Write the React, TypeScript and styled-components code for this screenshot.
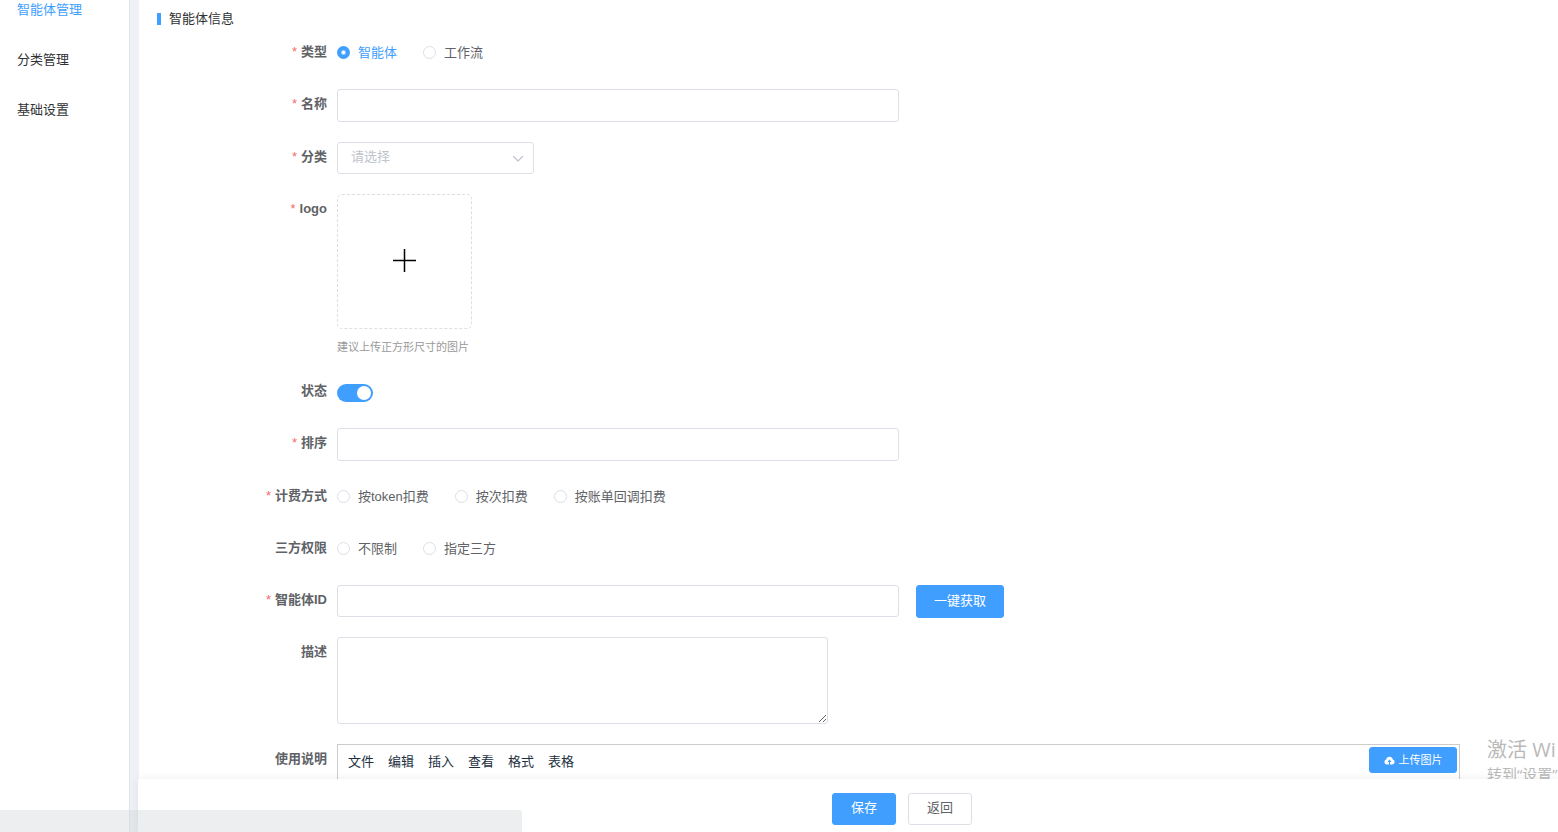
import React from "react";
import styled, { createGlobalStyle, css } from "styled-components";

const blue = "#409eff";
const line = "#dcdfe6";
const ink = "#606266";

const GlobalStyle = createGlobalStyle`
  *, *::before, *::after { box-sizing: border-box; }
  body {
    margin: 0;
    background: #eef2f6;
    color: ${ink};
    font: 13px/20px "Liberation Sans", "Noto Sans CJK SC", sans-serif;
  }
  button, input, select, textarea { font: inherit; color: inherit; margin: 0; }
`;

const Page = styled.div`
  position: relative;
  display: flex;
  gap: 9px;
  height: 100vh;
  overflow: hidden;
`;

const Sidebar = styled.nav`
  flex: none;
  display: flex;
  flex-direction: column;
  gap: 30px;
  width: 130px;
  padding-left: 17px;
  border-right: 1px solid #e2e4e6;
  background: #fff;
`;

const NavLink = styled.a<{ $active?: boolean }>`
  color: ${(p) => (p.$active ? blue : "#303133")};
  text-decoration: none;
`;

const Main = styled.main`
  flex: 1;
  min-width: 0;
  padding: 9px 98px 0 18px;
  background: #fff;
  overflow: hidden;
`;

const Title = styled.h1`
  display: flex;
  align-items: center;
  gap: 8px;
  margin: 0 0 8px;
  color: #303133;
  font-size: 13px;
  font-weight: 400;

  &::before {
    content: "";
    width: 4px;
    height: 12px;
    background: ${blue};
  }
`;

const Form = styled.form`
  display: flex;
  flex-direction: column;
  gap: 20px;
`;

const Row = styled.div`
  display: flex;
  align-items: flex-start;
  min-height: 32px;
`;

const labelStyle = css<{ $required?: boolean }>`
  flex: none;
  width: 180px;
  padding-right: 10px;
  text-align: right;
  font-weight: 700;
  line-height: 30px;

  ${(p) =>
    p.$required &&
    css`
      &::before {
        content: "*";
        margin-right: 4px;
        color: #f56c6c;
        font-weight: 400;
      }
    `}
`;

const Label = styled.label`
  ${labelStyle}
`;

const GroupLabel = styled.span`
  ${labelStyle}
`;

const TextInput = styled.input<{ $compact?: boolean }>`
  width: 562px;
  height: ${(p) => (p.$compact ? 32 : 33)}px;
  padding: 0 13px;
  border: 1px solid ${line};
  border-radius: 3px;
  background: #fff;
`;

const TextArea = styled.textarea`
  width: 491px;
  height: 87px;
  padding: 5px 13px;
  border: 1px solid ${line};
  border-radius: 3px;
  background: #fff;
  resize: both;
`;

const SelectWrap = styled.div`
  display: grid;
  align-items: center;
  width: 197px;

  > * { grid-area: 1 / 1; }
  > svg {
    justify-self: end;
    margin-right: 10px;
    pointer-events: none;
  }
`;

const Select = styled.select`
  appearance: none;
  width: 100%;
  height: 32px;
  padding: 0 30px 2px 13px;
  border: 1px solid ${line};
  border-radius: 3px;
  background: #fff;
  color: #c0c4cc;
`;

const RadioGroup = styled.div`
  display: flex;
  gap: 26px;
`;

const RadioLabel = styled.label`
  display: flex;
  align-items: center;
  gap: 8px;
  line-height: 31px;

  &:has(input:checked) { color: ${blue}; }
`;

const RadioInput = styled.input`
  appearance: none;
  width: 13px;
  height: 13px;
  border: 1px solid ${line};
  border-radius: 50%;
  background: #fff;

  &:checked {
    border: 0;
    background: radial-gradient(circle, #fff 1px, ${blue} 3px);
  }
`;

const UploadColumn = styled.div`
  display: flex;
  flex-direction: column;
  gap: 9px;
`;

const UploadBox = styled.button`
  display: grid;
  place-items: center;
  width: 135px;
  height: 135px;
  padding: 0 0 2px;
  border: 1px dashed ${line};
  border-radius: 5px;
  background: #fff;
`;

const Hint = styled.span`
  color: #999;
  font-size: 11px;
  line-height: 18px;
`;

const Switch = styled.input`
  appearance: none;
  width: 36px;
  height: 18px;
  margin-top: 8px;
  border-radius: 9px;
  background: ${line};

  &::before {
    content: "";
    display: block;
    width: 14px;
    height: 14px;
    margin: 2px;
    border-radius: 50%;
    background: #fff;
  }
  &:checked { background: ${blue}; }
  &:checked::before { margin-left: 20px; }
`;

const Button = styled.button<{ $primary?: boolean; $wide?: boolean }>`
  display: flex;
  align-items: center;
  justify-content: center;
  width: ${(p) => (p.$wide ? 88 : 64)}px;
  height: 32px;
  padding: 0 0 2px;
  border: 1px solid ${(p) => (p.$primary ? blue : line)};
  border-radius: 3px;
  background: ${(p) => (p.$primary ? blue : "#fff")};
  color: ${(p) => (p.$primary ? "#fff" : ink)};
`;

const FetchButton = styled(Button)`
  height: 33px;
  margin: 0 0 -1px 17px;
`;

const UploadButton = styled(Button)`
  gap: 4px;
  height: 26px;
  padding: 0;
  font-size: 11px;
`;

const Editor = styled.section`
  flex: 1;
  min-width: 0;
  height: 400px;
  border: 1px solid #ccc;
`;

const EditorBar = styled.div`
  display: flex;
  align-items: flex-start;
  justify-content: space-between;
  padding: 2px 2px 0 10px;
`;

const Menus = styled.div`
  display: flex;
  gap: 14px;
  padding-top: 5px;
`;

const MenuButton = styled.button`
  padding: 0;
  border: 0;
  background: none;
  color: #222f3e;
`;

const Footer = styled.footer`
  position: absolute;
  z-index: 2;
  right: 0;
  bottom: 0;
  left: 138px;
  display: flex;
  justify-content: center;
  gap: 12px;
  height: 53px;
  padding: 14px 0 0 108px;
  background: #fff;
  box-shadow: 0 0 8px rgba(0, 0, 0, 0.08);
`;

const Watermark = styled.aside`
  position: absolute;
  z-index: 1;
  right: 0;
  bottom: 47px;
  width: 71px;
  overflow: hidden;
  color: #b9b9b9;
  font-family: "Open Sans", "Noto Sans CJK SC", sans-serif;
  white-space: nowrap;
`;

const WatermarkTitle = styled.div`
  font-size: 20px;
  line-height: 26px;
`;

const WatermarkText = styled.div`
  font-size: 15px;
  line-height: 22px;
`;

const StatusBar = styled.div`
  position: absolute;
  z-index: 3;
  bottom: 0;
  left: 0;
  width: 522px;
  height: 22px;
  border-radius: 0 3px 0 0;
  background: rgba(210, 212, 216, 0.4);
`;

type RadiosProps = { name: string; label: string; options: string[]; required?: boolean; checked?: number };

function Radios({ name, label, options, required, checked }: RadiosProps) {
  return (
    <Row role="radiogroup" aria-labelledby={`${name}-label`}>
      <GroupLabel id={`${name}-label`} $required={required}>{label}</GroupLabel>
      <RadioGroup>
        {options.map((option, i) => (
          <RadioLabel key={option}>
            <RadioInput type="radio" name={name} defaultChecked={i === checked} />
            {option}
          </RadioLabel>
        ))}
      </RadioGroup>
    </Row>
  );
}

export default function App() {
  return (
    <>
      <GlobalStyle />
      <Page>
        <Sidebar>
          <NavLink href="#agents" $active>智能体管理</NavLink>
          <NavLink href="#categories">分类管理</NavLink>
          <NavLink href="#settings">基础设置</NavLink>
        </Sidebar>

        <Main>
          <Title>智能体信息</Title>
          <Form id="agent-form" onSubmit={(e) => e.preventDefault()}>
            <Radios name="type" label="类型" required checked={0} options={["智能体", "工作流"]} />
            <Row>
              <Label htmlFor="name" $required>名称</Label>
              <TextInput id="name" />
            </Row>
            <Row>
              <Label htmlFor="category" $required>分类</Label>
              <SelectWrap>
                <Select id="category" defaultValue="">
                  <option value="">请选择</option>
                </Select>
                <svg width="12" height="12" viewBox="0 0 12 12" fill="none" stroke="#c0c4cc" strokeWidth="1.2" strokeLinecap="round" strokeLinejoin="round" aria-hidden="true">
                  <path d="M1.5 4.5 6 9l4.500-4.500" />
                </svg>
              </SelectWrap>
            </Row>
            <Row>
              <Label htmlFor="logo" $required>logo</Label>
              <UploadColumn>
                <UploadBox id="logo" type="button">
                  <svg width="25" height="25" viewBox="0 0 25 25" stroke="#000" strokeWidth="1.500" aria-hidden="true">
                    <path d="M12.500 1v23M1 12.500h23" />
                  </svg>
                </UploadBox>
                <Hint>建议上传正方形尺寸的图片</Hint>
              </UploadColumn>
            </Row>
            <Row>
              <Label htmlFor="status">状态</Label>
              <Switch id="status" type="checkbox" role="switch" defaultChecked />
            </Row>
            <Row>
              <Label htmlFor="sort" $required>排序</Label>
              <TextInput id="sort" />
            </Row>
            <Radios name="billing" label="计费方式" required options={["按token扣费", "按次扣费", "按账单回调扣费"]} />
            <Radios name="access" label="三方权限" options={["不限制", "指定三方"]} />
            <Row>
              <Label htmlFor="agent-id" $required>智能体ID</Label>
              <TextInput id="agent-id" $compact />
              <FetchButton type="button" $primary $wide>一键获取</FetchButton>
            </Row>
            <Row>
              <Label htmlFor="description">描述</Label>
              <TextArea id="description" />
            </Row>
            <Row>
              <GroupLabel id="usage-label">使用说明</GroupLabel>
              <Editor aria-labelledby="usage-label">
                <EditorBar>
                  <Menus>
                    {["文件", "编辑", "插入", "查看", "格式", "表格"].map((item) => (
                      <MenuButton key={item} type="button">{item}</MenuButton>
                    ))}
                  </Menus>
                  <UploadButton type="button" $primary $wide>
                    <svg width="11" height="11" viewBox="0 0 22 22" aria-hidden="true">
                      <path fill="#fff" d="M6 19a5 5 0 0 1-1.500-9.800 6.600 6.600 0 0 1 13 0A5 5 0 0 1 16 19h-4v-5h3l-4-5-4 5h3v5z" />
                    </svg>
                    上传图片
                  </UploadButton>
                </EditorBar>
              </Editor>
            </Row>
          </Form>
        </Main>

        <Watermark>
          <WatermarkTitle>激活 Wi</WatermarkTitle>
          <WatermarkText>转到“设置”</WatermarkText>
        </Watermark>

        <Footer>
          <Button type="submit" form="agent-form" $primary>保存</Button>
          <Button type="button">返回</Button>
        </Footer>
        <StatusBar />
      </Page>
    </>
  );
}
